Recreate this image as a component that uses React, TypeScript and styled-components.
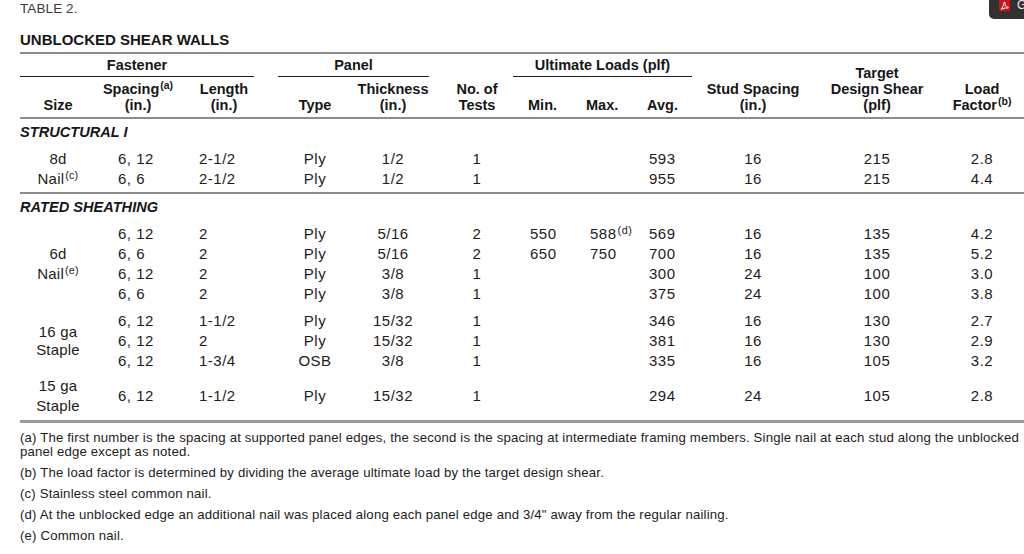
import React from "react";
import styled, { createGlobalStyle } from "styled-components";

const Global = createGlobalStyle`
  html, body { margin: 0; padding: 0; background: #fff; overflow: hidden; }
  body { font-family: "Liberation Sans", Arial, sans-serif; color: #1c1c1c; }
`;

const Page = styled.div`
  position: relative;
  width: 1024px;
  height: 554px;
  padding-left: 20px;
  box-sizing: border-box;
  overflow: hidden;
`;

const Caption = styled.div`
  font-size: 13.5px;
  line-height: 18px;
  color: #3a3a3a;
  letter-spacing: 0.1px;
`;

const Title = styled.div`
  margin-top: 13px;
  font-size: 15px;
  font-weight: 700;
  line-height: 18px;
  color: #161616;
`;

const Table = styled.table`
  margin-top: 3px;
  width: 1004px;
  border-collapse: collapse;
  table-layout: fixed;
`;

const GroupTh = styled.th`
  border-top: 2px solid #8c8c8c;
  padding: 0;
  vertical-align: bottom;
  height: 23px;
  font-size: 14.5px;
  font-weight: 700;
  color: #161616;
`;

const GroupLabel = styled.div<{ $gap: number }>`
  margin-right: ${(p) => p.$gap}px;
  padding: 3px 0 3px;
  line-height: 16px;
  border-bottom: 1px solid #222;
  text-align: center;
`;

const HeadTh = styled.th<{ $align?: "left" | "center"; $pl?: number; $pr?: number; $top?: boolean }>`
  padding: 0 ${(p) => p.$pr ?? 0}px 4px ${(p) => p.$pl ?? 0}px;
  height: 36px;
  vertical-align: bottom;
  text-align: ${(p) => p.$align ?? "center"};
  font-size: 14.5px;
  font-weight: 700;
  line-height: 16px;
  color: #161616;
  border-bottom: 2px solid #8c8c8c;
  ${(p) => (p.$top ? "border-top: 2px solid #8c8c8c;" : "")}
`;

const Sup = styled.sup`
  font-size: 0.72em;
  line-height: 0;
  vertical-align: 0.45em;
  margin-left: 1px;
`;

const SectionCell = styled.td<{ $pt: number; $h: number }>`
  padding: ${(p) => p.$pt}px 0 0 0;
  height: ${(p) => p.$h}px;
  vertical-align: top;
  font-size: 14.6px;
  font-weight: 700;
  font-style: italic;
  line-height: 16px;
  color: #161616;
`;

const Cell = styled.td<{ $align?: "left" | "center"; $pl?: number; $pr?: number; $lh?: number }>`
  padding: 0 ${(p) => p.$pr ?? 0}px 0 ${(p) => p.$pl ?? 0}px;
  height: 20px;
  text-align: ${(p) => p.$align ?? "center"};
  vertical-align: middle;
  font-size: 15px;
  letter-spacing: 0.5px;
  line-height: ${(p) => p.$lh ?? 20}px;
  white-space: nowrap;
  color: #1c1c1c;
`;

const SizeCell = styled(Cell)`
  letter-spacing: 0.2px;
`;

const GapCell = styled.td<{ $h: number; $rule?: "thin" | "thick" }>`
  padding: 0;
  height: ${(p) => p.$h}px;
  ${(p) =>
    p.$rule === "thin"
      ? "border-bottom: 2px solid #8c8c8c;"
      : p.$rule === "thick"
      ? "border-bottom: 3px solid #9a9a9a;"
      : ""}
`;

const Notes = styled.div`
  padding-top: 8px;
  width: 1006px;
  font-size: 13.2px;
  letter-spacing: 0.17px;
  line-height: 14px;
  color: #1c1c1c;
`;

const Note = styled.p`
  margin: 0 0 7px;
`;

const PdfTab = styled.div`
  position: absolute;
  top: -6px;
  left: 989px;
  width: 60px;
  height: 25px;
  border-radius: 5px;
  background: #323232;
  display: flex;
  align-items: flex-end;
  gap: 7px;
  padding: 0 0 8px 10px;
  box-sizing: border-box;
  color: #f2f2f2;
  font-size: 12px;
  line-height: 11px;
`;

const cols = [76, 84, 86, 12, 74, 82, 79, 63, 60, 64, 106, 142, 76];

type Row = {
  size?: React.ReactNode;
  sizeSpan?: number;
  sizeLh?: number;
  spacing: string;
  length: string;
  type: string;
  thick: string;
  tests: string;
  min?: string;
  max?: React.ReactNode;
  avg: string;
  stud: string;
  target: string;
  factor: string;
  h?: number;
};

const DataRow: React.FC<{ r: Row }> = ({ r }) => (
  <tr style={r.h ? { height: r.h } : undefined}>
    {r.size !== null && (
      <SizeCell rowSpan={r.sizeSpan} $lh={r.sizeLh}>
        {r.size}
      </SizeCell>
    )}
    <Cell $align="left" $pl={22}>{r.spacing}</Cell>
    <Cell $align="left" $pl={19}>{r.length}</Cell>
    <Cell />
    <Cell>{r.type}</Cell>
    <Cell>{r.thick}</Cell>
    <Cell $pl={7}>{r.tests}</Cell>
    <Cell $align="left" $pl={17}>{r.min ?? ""}</Cell>
    <Cell $align="left" $pl={14}>{r.max ?? ""}</Cell>
    <Cell $align="left" $pl={13}>{r.avg}</Cell>
    <Cell>{r.stud}</Cell>
    <Cell>{r.target}</Cell>
    <Cell $pr={8}>{r.factor}</Cell>
  </tr>
);

const structural: Row[] = [
  { size: "8d", spacing: "6, 12", length: "2-1/2", type: "Ply", thick: "1/2", tests: "1", avg: "593", stud: "16", target: "215", factor: "2.8" },
  { size: <>Nail<Sup>(c)</Sup></>, spacing: "6, 6", length: "2-1/2", type: "Ply", thick: "1/2", tests: "1", avg: "955", stud: "16", target: "215", factor: "4.4" },
];

const sixD: Row[] = [
  { size: "", spacing: "6, 12", length: "2", type: "Ply", thick: "5/16", tests: "2", min: "550", max: <>588<Sup>(d)</Sup></>, avg: "569", stud: "16", target: "135", factor: "4.2" },
  { size: "6d", spacing: "6, 6", length: "2", type: "Ply", thick: "5/16", tests: "2", min: "650", max: "750", avg: "700", stud: "16", target: "135", factor: "5.2" },
  { size: <>Nail<Sup>(e)</Sup></>, spacing: "6, 12", length: "2", type: "Ply", thick: "3/8", tests: "1", avg: "300", stud: "24", target: "100", factor: "3.0" },
  { size: "", spacing: "6, 6", length: "2", type: "Ply", thick: "3/8", tests: "1", avg: "375", stud: "24", target: "100", factor: "3.8" },
];

const staple16: Row[] = [
  { size: <>16 ga<br />Staple</>, sizeSpan: 3, sizeLh: 18, spacing: "6, 12", length: "1-1/2", type: "Ply", thick: "15/32", tests: "1", avg: "346", stud: "16", target: "130", factor: "2.7" },
  { size: null, spacing: "6, 12", length: "2", type: "Ply", thick: "15/32", tests: "1", avg: "381", stud: "16", target: "130", factor: "2.9" },
  { size: null, spacing: "6, 12", length: "1-3/4", type: "OSB", thick: "3/8", tests: "1", avg: "335", stud: "16", target: "105", factor: "3.2" },
];

const staple15: Row[] = [
  { size: <>15 ga<br />Staple</>, sizeLh: 20, h: 40, spacing: "6, 12", length: "1-1/2", type: "Ply", thick: "15/32", tests: "1", avg: "294", stud: "24", target: "105", factor: "2.8" },
];

const Gap: React.FC<{ h: number; rule?: "thin" | "thick" }> = ({ h, rule }) => (
  <tr>
    <GapCell colSpan={13} $h={h} $rule={rule} />
  </tr>
);

export default function App() {
  return (
    <Page>
      <Global />
      <Caption>TABLE 2.</Caption>
      <Title>UNBLOCKED SHEAR WALLS</Title>
      <Table>
        <colgroup>
          {cols.map((w, i) => (
            <col key={i} style={{ width: w }} />
          ))}
        </colgroup>
        <thead>
          <tr>
            <GroupTh colSpan={3}>
              <GroupLabel $gap={12}>Fastener</GroupLabel>
            </GroupTh>
            <GroupTh />
            <GroupTh colSpan={2}>
              <GroupLabel $gap={5}>Panel</GroupLabel>
            </GroupTh>
            <GroupTh />
            <GroupTh colSpan={3}>
              <GroupLabel $gap={8}>Ultimate Loads (plf)</GroupLabel>
            </GroupTh>
            <GroupTh />
            <HeadTh rowSpan={2} $top>
              Target
              <br />
              Design Shear
              <br />
              (plf)
            </HeadTh>
            <GroupTh />
          </tr>
          <tr>
            <HeadTh>Size</HeadTh>
            <HeadTh>
              Spacing<Sup>(a)</Sup>
              <br />
              (in.)
            </HeadTh>
            <HeadTh $pl={2}>
              Length
              <br />
              (in.)
            </HeadTh>
            <HeadTh />
            <HeadTh>Type</HeadTh>
            <HeadTh>
              Thickness
              <br />
              (in.)
            </HeadTh>
            <HeadTh $pl={7}>
              No. of
              <br />
              Tests
            </HeadTh>
            <HeadTh $align="left" $pl={15}>Min.</HeadTh>
            <HeadTh $align="left" $pl={10}>Max.</HeadTh>
            <HeadTh $align="left" $pl={11}>Avg.</HeadTh>
            <HeadTh>
              Stud Spacing
              <br />
              (in.)
            </HeadTh>
            <HeadTh $pr={8}>
              Load
              <br />
              Factor<Sup>(b)</Sup>
            </HeadTh>
          </tr>
        </thead>
        <tbody>
          <tr>
            <SectionCell colSpan={13} $pt={5} $h={25}>STRUCTURAL I</SectionCell>
          </tr>
          {structural.map((r, i) => (
            <DataRow key={i} r={r} />
          ))}
          <Gap h={3} rule="thin" />
          <tr>
            <SectionCell colSpan={13} $pt={5} $h={25}>RATED SHEATHING</SectionCell>
          </tr>
          {sixD.map((r, i) => (
            <DataRow key={i} r={r} />
          ))}
          <Gap h={7} />
          {staple16.map((r, i) => (
            <DataRow key={i} r={r} />
          ))}
          <Gap h={5} />
          {staple15.map((r, i) => (
            <DataRow key={i} r={r} />
          ))}
          <Gap h={4} rule="thick" />
        </tbody>
      </Table>
      <Notes>
        <Note>
          (a) The first number is the spacing at supported panel edges, the second is the spacing at intermediate framing
          members. Single nail at each stud along the unblocked panel edge except as noted.
        </Note>
        <Note>(b) The load factor is determined by dividing the average ultimate load by the target design shear.</Note>
        <Note>(c) Stainless steel common nail.</Note>
        <Note>(d) At the unblocked edge an additional nail was placed along each panel edge and 3/4" away from the regular nailing.</Note>
        <Note>(e) Common nail.</Note>
      </Notes>
      <PdfTab>
        <svg width="11" height="12" viewBox="0 0 11 12">
          <rect width="11" height="12" rx="1" fill="#c8161d" />
          <path
            d="M2.3 10c1.2-.9 2.4-3.6 2.8-6.3.15-.9 1-.9.8.3-.3 2.3 1.3 4.1 3 4.2.8.1.5.9-.25.8-2.4-.3-4.8.3-6 1.5"
            fill="none"
            stroke="#fff"
            strokeWidth="1"
            strokeLinecap="round"
          />
        </svg>
        <span>Get</span>
      </PdfTab>
    </Page>
  );
}
